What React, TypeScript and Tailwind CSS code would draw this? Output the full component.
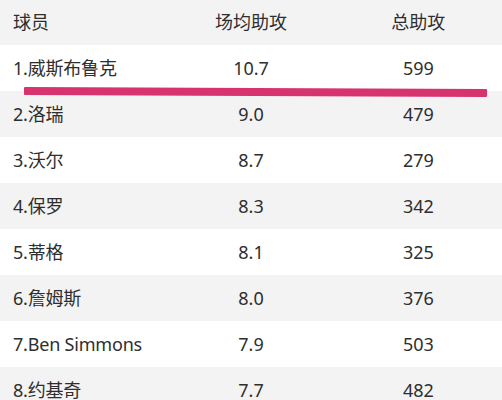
import React from "react";

const rows = [
  ["1.威斯布鲁克", "10.7", "599"],
  ["2.洛瑞", "9.0", "479"],
  ["3.沃尔", "8.7", "279"],
  ["4.保罗", "8.3", "342"],
  ["5.蒂格", "8.1", "325"],
  ["6.詹姆斯", "8.0", "376"],
  ["7.Ben Simmons", "7.9", "503"],
  ["8.约基奇", "7.7", "482"],
];

export default function App() {
  return (
    <div
      className="relative w-[502px] h-[400px] overflow-hidden bg-white text-[#2e2e2e] text-[18px]"
      style={{ fontFamily: '"Noto Sans", "Noto Sans CJK SC", sans-serif' }}
    >
      <div className="grid grid-cols-3 h-[45px] items-center bg-[#f3f3f3]">
        <div className="pl-[13px]">球员</div>
        <div className="text-center">场均助攻</div>
        <div className="text-center">总助攻</div>
      </div>
      {rows.map((r, i) => (
        <div
          key={i}
          className={`grid grid-cols-3 h-[46px] items-center ${i % 2 === 1 ? "bg-[#f3f3f3]" : "bg-white"}`}
        >
          <div className="pl-[13px] tracking-[-0.2px]">{r[0]}</div>
          <div className="text-center">{r[1]}</div>
          <div className="text-center">{r[2]}</div>
        </div>
      ))}
      <div className="absolute left-[24px] top-[88px] w-[463px] h-[8px] bg-[#d6336f] rounded-[1px] rotate-[0.25deg]" />
    </div>
  );
}
